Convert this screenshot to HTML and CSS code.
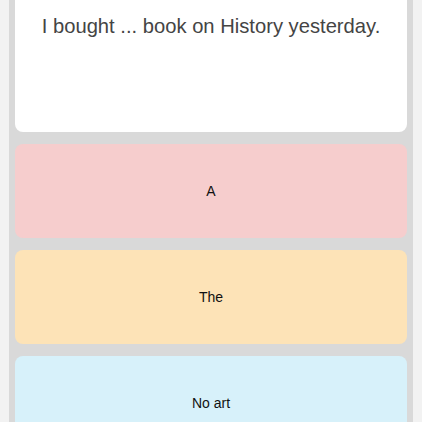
FILE: index.html
```html
<!DOCTYPE html>
<html lang="en">
<head>
  <meta charset="UTF-8" />
  <title>Articles Quiz</title>
  <link rel="stylesheet" href="styles.css">
</head>
<body>

<div class="panel">

  <div class="question-card">
    <p class="question">I bought ... book on History yesterday.</p>
  </div>

  <button class="option option-a">A</button>
  <button class="option option-the">The</button>
  <button class="option option-none">No art</button>

</div>

</body>
</html>
```

FILE: styles.css
```css
body {
  font-family: 'Liberation Sans', Arial, sans-serif;
  background: #f2f2f2;
  margin: 0;
  padding: 0;
  overflow: hidden;
}

.panel {
  margin: 0 9px;
  padding: 0 6px;
  background: #d9d9d9;
  min-height: 422px;
  display: flex;
  flex-direction: column;
  gap: 12px;
}

.question-card {
  background: white;
  border-radius: 8px;
  margin-top: -40px;
  height: 172px;
  padding-top: 55px;
  box-sizing: border-box;
  text-align: center;
}

.question {
  margin: 0;
  font-size: 20.2px;
  color: #444;
}

.option {
  border: none;
  border-radius: 8px;
  height: 94px;
  flex-shrink: 0;
  font-family: inherit;
  font-size: 14px;
  color: #111;
  cursor: pointer;
}

.option-a {
  background-color: #f6cdcd;
}

.option-the {
  background-color: #fde3b7;
}

.option-none {
  background-color: #d7f1fa;
}
```
